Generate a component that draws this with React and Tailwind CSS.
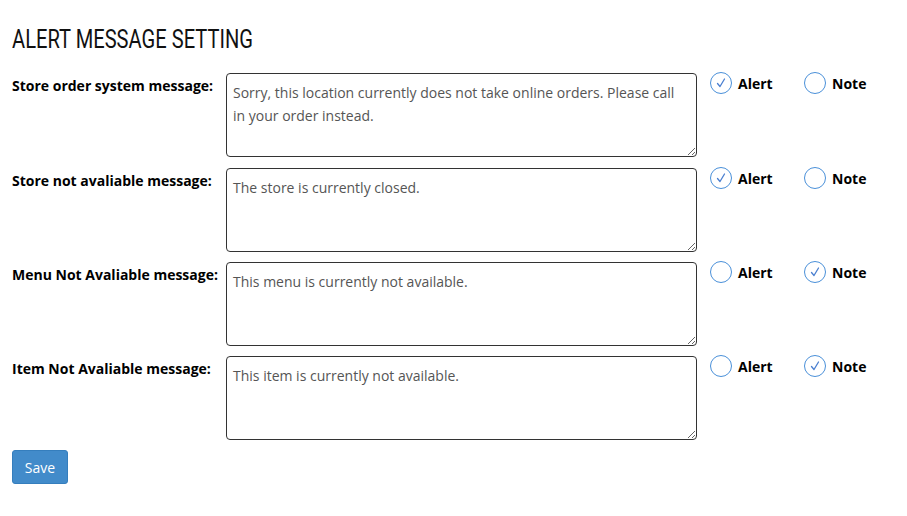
import React from 'react';

const rows = [
  { label: 'Store order system message:', text: 'Sorry, this location currently does not take online orders. Please call in your order instead.', value: 'alert' },
  { label: 'Store not avaliable message:', text: 'The store is currently closed.', value: 'alert' },
  { label: 'Menu Not Avaliable message:', text: 'This menu is currently not available.', value: 'note' },
  { label: 'Item Not Avaliable message:', text: 'This item is currently not available.', value: 'note' },
];

const Radio = ({ checked, label }) => (
  <label className="flex items-center gap-[6px] cursor-pointer">
    <span className="w-[22px] h-[22px] rounded-full border border-[#4a90d9] flex items-center justify-center">
      {checked && (
        <svg width="12" height="12" viewBox="0 0 12 12" fill="none">
          <path d="M2.5 6.5 L5 9.5 L9.5 2" stroke="#4a7fd0" strokeWidth="1.3" strokeLinecap="round" strokeLinejoin="round" />
        </svg>
      )}
    </span>
    <span className="text-[14px] font-bold text-black">{label}</span>
  </label>
);

const App = () => (
  <div className="w-[907px] h-[516px] bg-white px-3 pt-[25px] font-['Open_Sans',sans-serif]">
    <h1 className="font-['Roboto',sans-serif] text-[25px] leading-[30px] text-[#111] scale-x-[0.805] origin-left mb-[18px]">
      ALERT MESSAGE SETTING
    </h1>
    <div className="flex flex-col gap-[10px]">
      {rows.map((r, i) => (
        <div key={r.label} className={`flex items-start ${i === 1 ? 'mt-[1px]' : ''}`}>
          <div className="w-[214px] pt-[3px] text-[14px] leading-[20px] font-bold text-black">{r.label}</div>
          <textarea
            defaultValue={r.text}
            className="w-[471px] h-[84px] border border-[#333] rounded-[4px] px-[6px] pt-[7px] text-[14px] leading-[23px] text-[#555] resize-y outline-none"
          />
          <div className="flex items-center pl-[13px] -mt-[1px]">
            <div className="w-[94px]"><Radio checked={r.value === 'alert'} label="Alert" /></div>
            <Radio checked={r.value === 'note'} label="Note" />
          </div>
        </div>
      ))}
    </div>
    <button className="mt-[10px] w-[56px] h-[34px] rounded-[3px] bg-[#428bca] border border-[#357ebd] text-white text-[14px]">
      Save
    </button>
  </div>
);

export default App;
